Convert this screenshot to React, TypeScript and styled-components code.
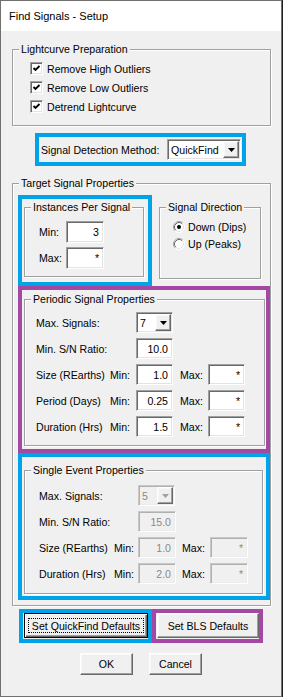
import React from 'react';
import styled, { createGlobalStyle, css } from 'styled-components';

const GlobalStyle = createGlobalStyle`
    html, body {
        margin: 0;
        padding: 0;
        background: #1f1f1f;
    }
    body {
        font-family: 'Liberation Sans', Arial, sans-serif;
        font-size: 10.6px;
        color: #000;
    }
    * {
        box-sizing: border-box;
    }
`;

const BLUE = '#00a2e8';
const PURPLE = '#a349a4';

const sunken = css`
    border-style: solid;
    border-width: 1px;
    border-color: #a0a0a0 #fff #fff #a0a0a0;
    box-shadow: inset 1px 1px 0 #696969, inset -1px -1px 0 #e3e3e3;
`;

const raised = css`
    border-style: solid;
    border-width: 1px;
    border-color: #fff #696969 #696969 #fff;
    box-shadow: inset -1px -1px 0 #a0a0a0, inset 1px 1px 0 #f8f8f8;
`;

const Window = styled.div`
    width: 282px;
    height: 697px;
    border: 1px solid #707070;
    background: #f0f0f0;
    display: flex;
    flex-direction: column;
`;

const TitleBar = styled.div`
    flex: none;
    height: 30px;
    background: #fff;
    display: flex;
    align-items: center;
    padding-left: 8px;
    font-size: 11px;
`;

const Content = styled.div`
    display: flex;
    flex-direction: column;
    align-items: flex-start;
    padding-top: 12px;
`;

const GroupBox = styled.fieldset<{ $w: number; $mt?: number; $ml?: number }>`
    margin: ${p => p.$mt || 0}px 0 0 ${p => p.$ml || 0}px;
    padding: 0;
    min-width: 0;
    width: ${p => p.$w}px;
    border: 1px solid #a0a0a0;
    box-shadow: inset 1px 1px 0 #fff, 1px 1px 0 #fff;
`;

const Legend = styled.legend`
    margin-left: 6px;
    padding: 0 2px;
    line-height: 13px;
    background: #f0f0f0;
`;

const Mark = styled.div<{ $color: string; $w: number; $h?: number; $mt?: number; $ml?: number }>`
    flex: none;
    width: ${p => p.$w}px;
    ${p => p.$h && `height: ${p.$h}px;`}
    margin: ${p => p.$mt || 0}px 0 0 ${p => p.$ml || 0}px;
    border: 4px solid ${p => p.$color};
`;

const CheckList = styled.div`
    display: flex;
    flex-direction: column;
    gap: 6px;
    padding: 6px 0 12px 17px;
`;

const CheckRow = styled.div`
    display: flex;
    align-items: center;
    gap: 4px;
    height: 13px;
`;

const CheckBox = styled.span`
    ${sunken};
    width: 13px;
    height: 13px;
    background: #fff;
    display: flex;
    align-items: center;
    justify-content: center;
`;

const DetectionBox = styled(Mark)`
    display: flex;
    align-items: center;
    justify-content: space-between;
    padding: 0 1px 0 2px;
`;

const ComboShell = styled.div<{ $w: number; $disabled?: boolean }>`
    ${sunken};
    ${p => p.$disabled && css`
        border-color: #c8c8c8 #fff #fff #c8c8c8;
        box-shadow: inset 1px 1px 0 #b0b0b0, inset -1px -1px 0 #ececec;
    `}
    width: ${p => p.$w}px;
    height: 21px;
    padding: 1px;
    display: flex;
    background: ${p => (p.$disabled ? '#f0f0f0' : '#fff')};
    color: ${p => (p.$disabled ? '#8a8a8a' : '#000')};
`;

const ComboText = styled.span`
    flex: 1;
    display: flex;
    align-items: center;
    padding-left: 2px;
`;

const ComboButton = styled.span`
    ${raised};
    width: 16px;
    background: #f0f0f0;
    display: flex;
    align-items: center;
    justify-content: center;
`;

const TopRow = styled.div`
    display: flex;
    align-items: flex-start;
`;

const InstancesGrid = styled.div`
    display: grid;
    grid-template-columns: 27px 38px;
    grid-auto-rows: 22px;
    row-gap: 4px;
    align-items: center;
    padding: 7px 0 7px 14px;
`;

const RadioList = styled.div`
    display: flex;
    flex-direction: column;
    gap: 4px;
    padding: 6px 0 0 13px;
`;

const RadioRow = styled.div`
    display: flex;
    align-items: center;
    gap: 3px;
    height: 13px;
`;

const TargetBody = styled.div`
    padding: 5px 0 5px 5px;
`;

const PropGrid = styled.div<{ $cols: string; $pt: number; $pb: number; $pl: number }>`
    display: grid;
    grid-template-columns: ${p => p.$cols};
    grid-auto-rows: 21px;
    row-gap: 5px;
    align-items: center;
    padding: ${p => p.$pt}px 0 ${p => p.$pb}px ${p => p.$pl}px;
`;

const Label = styled.span<{ $span?: number; $pl?: number; $disabled?: boolean }>`
    ${p => p.$span && `grid-column: span ${p.$span};`}
    padding-left: ${p => p.$pl || 0}px;
    white-space: nowrap;
`;

const TextBox = styled.div<{ $disabled?: boolean }>`
    ${sunken};
    ${p => p.$disabled && css`
        border-color: #c8c8c8 #fff #fff #c8c8c8;
        box-shadow: inset 1px 1px 0 #b0b0b0, inset -1px -1px 0 #ececec;
    `}
    height: 100%;
    display: flex;
    align-items: center;
    justify-content: flex-end;
    padding-right: 4px;
    background: ${p => (p.$disabled ? '#f0f0f0' : '#fff')};
    color: ${p => (p.$disabled ? '#8a8a8a' : '#000')};
`;

const ButtonRow = styled.div`
    display: flex;
    margin: 3px 0 0 18px;
`;

const Button = styled.button<{ $w: number; $h: number; $default?: boolean }>`
    font: inherit;
    color: #000;
    background: #f0f0f0;
    width: ${p => p.$w}px;
    height: ${p => p.$h}px;
    padding: 0;
    display: flex;
    align-items: stretch;
    justify-content: center;
    ${raised};
    ${p => p.$default && css`
        border: 1px solid #000;
        box-shadow: inset 1px 1px 0 #fff, inset -1px -1px 0 #696969, inset -2px -2px 0 #a0a0a0;
        padding: 4px 3px;
    `}
`;

const ButtonText = styled.span`
    flex: 1;
    display: flex;
    align-items: center;
    justify-content: center;
`;

const FocusRing = styled(ButtonText)`
    border: 1px dotted #000;
`;

const MarkButton = styled(Mark)`
    display: flex;
    padding: 0 0 0 1px;
`;

const DialogButtons = styled.div`
    align-self: stretch;
    display: flex;
    justify-content: center;
    gap: 16px;
    margin-top: 10px;
`;

const Check = () => (
    <CheckBox>
        <svg width="9" height="9" viewBox="0 0 9 9">
            <polyline points="1.5,4 3.5,6 7.5,2" fill="none" stroke="#000" strokeWidth="1.9" />
        </svg>
    </CheckBox>
);

const Radio = ({ checked }: { checked?: boolean }) => (
    <svg width="12" height="12" viewBox="0 0 12 12">
        <circle cx="6" cy="6" r="5.5" fill="#fff" />
        <path d="M2.11 9.89 A5.5 5.5 0 0 1 9.89 2.11" fill="none" stroke="#a0a0a0" />
        <path d="M2.82 9.18 A4.5 4.5 0 0 1 9.18 2.82" fill="none" stroke="#696969" />
        <path d="M9.89 2.11 A5.5 5.5 0 0 1 2.11 9.89" fill="none" stroke="#fff" />
        <path d="M9.18 2.82 A4.5 4.5 0 0 1 2.82 9.18" fill="none" stroke="#e3e3e3" />
        {checked && <circle cx="6" cy="6" r="2" fill="#000" />}
    </svg>
);

const Combo = ({ value, w, disabled }: { value: string; w: number; disabled?: boolean }) => (
    <ComboShell $w={w} $disabled={disabled}>
        <ComboText>{value}</ComboText>
        <ComboButton>
            <svg width="7" height="4" viewBox="0 0 7 4">
                <polygon points="0,0 7,0 3.5,4" fill={disabled ? '#a0a0a0' : '#000'} />
            </svg>
        </ComboButton>
    </ComboShell>
);

interface RangeRow {
    label: string;
    min: string;
    max: string;
}

const periodicRows: RangeRow[] = [
    { label: 'Size (REarths)', min: '1.0', max: '*' },
    { label: 'Period (Days)', min: '0.25', max: '*' },
    { label: 'Duration (Hrs)', min: '1.5', max: '*' },
];

const singleRows: RangeRow[] = [
    { label: 'Size (REarths)', min: '1.0', max: '*' },
    { label: 'Duration (Hrs)', min: '2.0', max: '*' },
];

const PropertyRows = ({
    signals,
    snr,
    rows,
    cols,
    maxPad,
    disabled,
}: {
    signals: string;
    snr: string;
    rows: RangeRow[];
    cols: string;
    maxPad: number;
    disabled?: boolean;
}) => (
    <>
        <Label $span={2}>Max. Signals:</Label>
        <Combo value={signals} w={37} disabled={disabled} />
        <span />
        <span />
        <Label $span={2}>Min. S/N Ratio:</Label>
        <TextBox $disabled={disabled}>{snr}</TextBox>
        <span />
        <span />
        {rows.map(r => (
            <React.Fragment key={r.label}>
                <Label>{r.label}</Label>
                <Label>Min:</Label>
                <TextBox $disabled={disabled}>{r.min}</TextBox>
                <Label $pl={maxPad}>Max:</Label>
                <TextBox $disabled={disabled}>{r.max}</TextBox>
            </React.Fragment>
        ))}
    </>
);

const App = () => (
    <>
        <GlobalStyle />
        <Window>
            <TitleBar>Find Signals - Setup</TitleBar>
            <Content>
                <GroupBox $w={259} $ml={11}>
                    <Legend>Lightcurve Preparation</Legend>
                    <CheckList>
                        <CheckRow><Check />Remove High Outliers</CheckRow>
                        <CheckRow><Check />Remove Low Outliers</CheckRow>
                        <CheckRow><Check />Detrend Lightcurve</CheckRow>
                    </CheckList>
                </GroupBox>

                <DetectionBox $color={BLUE} $w={211} $h={33} $mt={7} $ml={34}>
                    <span>Signal Detection Method:</span>
                    <Combo value="QuickFind" w={74} />
                </DetectionBox>

                <GroupBox $w={259} $mt={11} $ml={11}>
                    <Legend>Target Signal Properties</Legend>
                    <TargetBody>
                        <TopRow>
                            <Mark $color={BLUE} $w={134} $h={91}>
                                <GroupBox $w={120} $mt={2} $ml={2}>
                                    <Legend>Instances Per Signal</Legend>
                                    <InstancesGrid>
                                        <Label>Min:</Label>
                                        <TextBox>3</TextBox>
                                        <Label>Max:</Label>
                                        <TextBox>*</TextBox>
                                    </InstancesGrid>
                                </GroupBox>
                            </Mark>
                            <GroupBox $w={102} $mt={6} $ml={7} style={{ height: 78 }}>
                                <Legend>Signal Direction</Legend>
                                <RadioList>
                                    <RadioRow><Radio checked />Down (Dips)</RadioRow>
                                    <RadioRow><Radio />Up (Peaks)</RadioRow>
                                </RadioList>
                            </GroupBox>
                        </TopRow>

                        <Mark $color={PURPLE} $w={252} $h={167}>
                            <GroupBox $w={241} $mt={3} $ml={2}>
                                <Legend>Periodic Signal Properties</Legend>
                                <PropGrid $cols="74px 26px 37px 35px 37px" $pt={6} $pb={8} $pl={11}>
                                    <PropertyRows signals="7" snr="10.0" rows={periodicRows} cols="" maxPad={7} />
                                </PropGrid>
                            </GroupBox>
                        </Mark>

                        <Mark $color={BLUE} $w={252} $h={147}>
                            <GroupBox $w={239} $mt={7} $ml={2}>
                                <Legend>Single Event Properties</Legend>
                                <PropGrid $cols="75px 24px 38px 34px 38px" $pt={8} $pb={9} $pl={14}>
                                    <PropertyRows signals="5" snr="15.0" rows={singleRows} cols="" maxPad={6} disabled />
                                </PropGrid>
                            </GroupBox>
                        </Mark>
                    </TargetBody>
                </GroupBox>

                <ButtonRow>
                    <MarkButton $color={BLUE} $w={133} $h={34}>
                        <Button $w={125} $h={25} $default>
                            <FocusRing>Set QuickFind Defaults</FocusRing>
                        </Button>
                    </MarkButton>
                    <MarkButton $color={PURPLE} $w={111} $h={34}>
                        <Button $w={102} $h={25}>
                            <ButtonText>Set BLS Defaults</ButtonText>
                        </Button>
                    </MarkButton>
                </ButtonRow>

                <DialogButtons>
                    <Button $w={53} $h={22}><ButtonText>OK</ButtonText></Button>
                    <Button $w={53} $h={22}><ButtonText>Cancel</ButtonText></Button>
                </DialogButtons>
            </Content>
        </Window>
    </>
);

export default App;
